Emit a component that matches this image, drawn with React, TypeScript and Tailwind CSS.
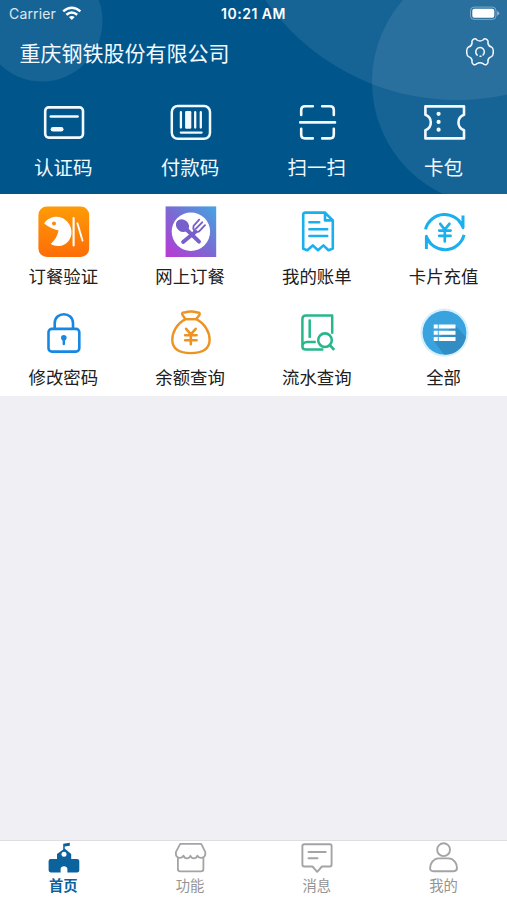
import type { ReactNode } from 'react';

type Item = { label: string; icon: ReactNode };

function Glyph({ children }: { children: ReactNode }) {
  return (
    <svg
      viewBox="0 0 54 54"
      className="block h-[54px] w-[54px] shrink-0"
      fill="none"
      stroke="currentColor"
      strokeLinecap="round"
      strokeLinejoin="round"
    >
      {children}
    </svg>
  );
}

const quick: Item[] = [
  {
    label: '认证码',
    icon: (
      <Glyph>
        <rect x="9.2" y="7.4" width="37.8" height="30.2" rx="3.5" strokeWidth="2.6" />
        <path d="M14.8 16.5H41.6" strokeWidth="2.6" />
        <path d="M17 29.2H25.2" strokeWidth="4.6" />
      </Glyph>
    ),
  },
  {
    label: '付款码',
    icon: (
      <Glyph>
        <rect x="8.8" y="6" width="38.2" height="32.8" rx="6" strokeWidth="2.5" />
        <path d="M17.9 12.2V27.6M32.2 12.2V27.6M37.8 12.2V27.6M17.8 32.6H38.6" strokeWidth="2.3" />
        <rect x="22.1" y="11" width="6.2" height="17.8" rx="1.2" fill="currentColor" stroke="none" />
      </Glyph>
    ),
  },
  {
    label: '扫一扫',
    icon: (
      <Glyph>
        <path
          d="M11.2 15V10Q11.2 6.3 15 6.3H22.8M32.2 6.3H40Q43.8 6.3 43.8 10V15M11.2 28.8V34.5Q11.2 38.4 15 38.4H22.8M32.2 38.4H40Q43.8 38.4 43.8 34.5V28.8M10.2 22.4H45"
          strokeWidth="2.6"
        />
      </Glyph>
    ),
  },
  {
    label: '卡包',
    icon: (
      <Glyph>
        <path
          d="M8.4 6.4H47V14.8C39.6 17.6 39.6 27.3 47 30.2V38.4H8.4V30.2C15.6 27.3 15.6 17.6 8.4 14.8Z"
          strokeWidth="2.6"
        />
        <g fill="currentColor" stroke="none">
          <circle cx="21.6" cy="13.8" r="2.1" />
          <circle cx="21.6" cy="21.9" r="2.1" />
          <circle cx="21.6" cy="29.7" r="2.1" />
        </g>
      </Glyph>
    ),
  },
];

const services: Item[] = [
  {
    label: '订餐验证',
    icon: (
      <Glyph>
        <defs>
          <linearGradient id="orange" x1="0" y1="0" x2="0" y2="1">
            <stop offset="0" stopColor="#ff9b06" />
            <stop offset="1" stopColor="#fd6d08" />
          </linearGradient>
        </defs>
        <rect x="2.4" y="1.4" width="50.8" height="50.6" rx="8.5" fill="url(#orange)" stroke="none" />
        <path d="M8.1 18.4C13.6 10.2 25.3 9.5 31.6 17C37.5 24 36.6 33.3 30.3 38.2C25.6 41.8 19.2 41.8 14.6 39.1C18.6 35.6 21.4 31 22.6 25.4C18 24.2 12.6 22 8.1 18.4Z" fill="#fff" stroke="none" />
        <circle cx="18" cy="18.4" r="2" fill="#ff8908" stroke="none" />
        <path d="M37.6 13V40.4" stroke="#fff" strokeWidth="2.1" />
        <path d="M41.4 18.3L46.5 35.6" stroke="#fff" strokeWidth="1.9" />
      </Glyph>
    ),
  },
  {
    label: '网上订餐',
    icon: (
      <Glyph>
        <defs>
          <linearGradient id="violet" x1="0" y1="1" x2="1" y2="0">
            <stop offset="0" stopColor="#bb38d4" />
            <stop offset=".5" stopColor="#7a6bd2" />
            <stop offset="1" stopColor="#44a5e3" />
          </linearGradient>
        </defs>
        <rect x="2.6" y="1.4" width="50.6" height="50.6" fill="url(#violet)" stroke="none" />
        <circle cx="27.9" cy="26.7" r="19.2" fill="#fff" stroke="none" />
        <g stroke="#7860cc">
          <ellipse cx="19.5" cy="20.6" rx="7" ry="6" transform="rotate(40 19.5 20.6)" fill="#7860cc" stroke="none" />
          <path d="M23 24L36 36.7" strokeWidth="3.9" />
          <path d="M20.1 37L32.5 26.7" strokeWidth="3.9" />
          <path d="M36.2 14.7L30.6 20.8C29.5 24.7 31.8 28 36.1 26.4L42 20.2M39.2 17.3L32.7 23.9" strokeWidth="1.9" />
        </g>
      </Glyph>
    ),
  },
  {
    label: '我的账单',
    icon: (
      <Glyph>
        <g stroke="#1bb0ed" strokeWidth="2.6">
          <path d="M35 7.6H15.4Q13.2 7.6 13.2 9.8V43.8L17.3 45.2L22.8 40.4L28 45.2L33.4 40.4L38.5 45.2L42.8 43.6V15.5L35 7.6V15.4H42.8" />
          <path d="M19.4 17.2H29.2M19.4 24.2H37.2M19.4 31H37.2" />
        </g>
      </Glyph>
    ),
  },
  {
    label: '卡片充值',
    icon: (
      <Glyph>
        <g stroke="#1bb0ed" strokeWidth="3" strokeLinecap="butt">
          <path d="M8.5 24.4A19.6 19.6 0 0 1 46 22.6V10.4" />
          <path d="M47 29.8A19.6 19.6 0 0 1 9.4 31.4V44" />
        </g>
        <path d="M40.6 16.4L46.8 24.4L46 17ZM14.8 37.6L8.8 29.6L9.6 37Z" fill="#1bb0ed" stroke="none" />
        <path d="M23.2 18.8L27.8 24.6L32.4 18.8M27.8 24.6V36.4M22.2 25.6H33.6M22.2 30.8H33.6" stroke="#1bb0ed" strokeWidth="2.7" />
      </Glyph>
    ),
  },
  {
    label: '修改密码',
    icon: (
      <Glyph>
        <g stroke="#1688e4" strokeWidth="2.6">
          <rect x="12.5" y="22.9" width="30.8" height="22.7" rx="3.3" />
          <path d="M18.7 22.8V17.3C18.7 5.3 37 5.3 37 17.3V22.8" />
        </g>
        <circle cx="27.8" cy="31.8" r="2.8" fill="#1688e4" stroke="none" />
        <path d="M27.8 32.3V38" stroke="#1688e4" strokeWidth="2.4" />
      </Glyph>
    ),
  },
  {
    label: '余额查询',
    icon: (
      <Glyph>
        <g stroke="#ed9322" strokeWidth="2.4">
          <path d="M22.4 13.1C14 17.5 9 26.4 9.3 34.3C9.6 42.9 15 47.1 27.8 47.1C40.7 47.1 46.3 42.9 46.6 34.3C46.9 26.4 41.8 17.5 33.3 13.1Z" />
          <path d="M22.4 13.1L19.4 8.8C18.4 6.9 19.8 6.2 21.7 6.5C25.8 5.3 30.5 5.3 34.2 6.5C36.4 6.3 37.4 7.3 36.4 9.1L33.3 13.1Z" />
          <path d="M23.1 22.8L27.8 28.4L32.7 22.8M27.8 28.4V38.3M22.1 29.3H33.6M22.1 34.3H33.6" strokeWidth="2.6" />
        </g>
      </Glyph>
    ),
  },
  {
    label: '流水查询',
    icon: (
      <Glyph>
        <g stroke="#27b78b" strokeWidth="2.5" strokeLinecap="butt">
          <path d="M42.2 27.7V9.5H16Q12.4 9.5 12.4 13.1V40.5Q12.4 43.6 16 43.6H33.4M12.5 40.3C12.5 37.9 14.4 36 17 36H25.8" />
          <path d="M19.7 13.4V31.9" />
          <circle cx="35" cy="34.2" r="6.8" strokeWidth="2.6" />
          <path d="M39.8 39.1L44.2 43.9" strokeWidth="2.8" />
        </g>
      </Glyph>
    ),
  },
  {
    label: '全部',
    icon: (
      <Glyph>
        <circle cx="27.5" cy="26.7" r="24.1" fill="#d5effd" stroke="none" />
        <circle cx="27.5" cy="26.7" r="21.9" fill="#38a3df" stroke="none" />
        <path d="M38 19.5L49 31C46.9 42.2 37.7 49.2 26.9 48.6L17 35Z" fill="#318dc3" stroke="none" />
        <g fill="#fff" stroke="none">
          <path d="M16.7 18.6H20.8V22.6H16.7ZM21.7 18.6H38.5V22.6H21.7ZM16.7 24.7H20.8V28.7H16.7ZM21.7 24.7H38.5V28.7H21.7ZM16.7 30.9H20.8V34.9H16.7ZM21.7 30.9H38.5V34.9H21.7Z" />
        </g>
      </Glyph>
    ),
  },
];

const tabs: Item[] = [
  {
    label: '首页',
    icon: (
      <g fill="#0b629c" stroke="none">
        <path d="M16.2 7.5V1.8L22.8 .8V3.8L17.7 4.4V6.4L24.2 12V17H30Q32.3 17 32.3 19V28.4Q32.3 30.4 30 30.4H20.4V27C20.4 23.2 13.6 23.2 13.6 27V30.4H3.8Q1.6 30.4 1.6 28.3V19Q1.6 17 3.8 17H10V12Z" />
        <circle cx="17" cy="12.2" r="2.5" fill="#fff" />
      </g>
    ),
  },
  {
    label: '功能',
    icon: (
      <g strokeWidth="1.8">
        <path d="M6.2 1.8H27.2L31.2 9.8C32.4 16.6 25.2 17.4 23.4 13.6C21.8 17.2 17.9 17.2 16.4 13.8C14.9 17.2 10.9 17.2 9.4 13.6C7.6 17.4 .8 16.6 2 9.8Z" />
        <path d="M3.9 15.8V27Q3.9 29.3 6.2 29.3H27.1Q29.4 29.3 29.4 27V15.8" />
      </g>
    ),
  },
  {
    label: '消息',
    icon: (
      <g strokeWidth="1.9">
        <path d="M4.3 2.2H29.9Q31.6 2.2 31.6 4V22.6Q31.6 24.5 29.9 24.5H21.9L17.2 29.8L12.5 24.5H4.3Q2.4 24.5 2.4 22.6V4Q2.4 2.2 4.3 2.2Z" />
        <path d="M8.5 10H25.7M8.5 16.3H17.5" />
      </g>
    ),
  },
  {
    label: '我的',
    icon: (
      <g strokeWidth="1.9">
        <circle cx="16.6" cy="7.7" r="6.4" />
        <path d="M11.6 16.4H21.6C27 16.8 30 21.4 30 26.1Q30 29.2 26.9 29.2H6.3Q3.1 29.2 3.1 26.1C3.1 21.4 6.2 16.8 11.6 16.4Z" />
      </g>
    ),
  },
];

function StatusBar() {
  return (
    <div className="flex h-7 items-center justify-between pr-[7px] pl-[9px] font-['Inter','Liberation_Sans',sans-serif] leading-7">
      <div className="flex w-[150px] items-center gap-[6px] text-[14px] tracking-[0.15px] text-white/85">
        <span>Carrier</span>
        <svg viewBox="0 0 20 15" className="mb-0.5 h-[15px] w-5" fill="none" stroke="white">
          <path d="M1.2 5.4Q9.8-2 18.4 5.4M4.4 8.7Q9.8 4.2 15.2 8.7" strokeWidth="2.5" />
          <path d="M6.9 11.1Q9.8 8.8 12.7 11.1L9.8 14.1Z" fill="white" stroke="none" />
        </svg>
      </div>
      <span className="mr-[2px] text-[14px] font-semibold tracking-[0.5px] text-white">10:21 AM</span>
      <div className="flex w-[150px] justify-end">
        <svg viewBox="0 0 32 16" className="h-4 w-8" fill="none">
          <rect x="2.5" y="1.1" width="25.5" height="12.3" rx="3.5" stroke="white" strokeOpacity=".4" />
          <rect x="4.3" y="2.8" width="22" height="8.9" rx="2" fill="white" />
          <path d="M29.2 5V9.7Q31.2 8.8 31.2 7.3Q31.2 5.8 29.2 5Z" fill="white" fillOpacity=".5" />
        </svg>
      </div>
    </div>
  );
}

export default function App() {
  return (
    <div className="flex h-[900px] w-full flex-col overflow-hidden bg-[#efeff4] font-['Noto_Sans_CJK_SC','Noto_Sans',sans-serif]">
      <header className="relative h-[194px] shrink-0 overflow-hidden bg-[#00558b] text-[#f2f9ff]">
        <svg viewBox="0 0 507 194" className="absolute inset-0 h-[194px] w-[507px]" fill="white" fillOpacity=".085">
          <circle cx="42" cy="21" r="60.5" />
          <circle cx="457" cy="-134" r="234" />
          <circle cx="496" cy="82" r="124" />
        </svg>
        <div className="relative">
          <StatusBar />
          <div className="flex h-12 items-center justify-between pr-[13px] pl-[19.5px]">
            <h1 className="text-[21px] leading-[30px] font-normal">重庆钢铁股份有限公司</h1>
            <svg viewBox="0 0 28 28" className="h-7 w-7" fill="none" stroke="currentColor" strokeWidth="1.5" strokeLinecap="round" strokeLinejoin="round">
              <path d="M7.4 1.3C8.8.4 10 .8 11 2Q14 4 17 2C18 .8 19.2.4 20.6 1.3C22.3 2.4 22.3 3.6 21.9 5Q22.5 8.2 25.4 9C27 9.6 27.3 11.2 27.3 13.8C27.3 16.3 27 17.9 25.4 18.6Q22.5 19.4 21.9 22.5C22.3 24 22.3 25.2 20.6 26.3C19.2 27.2 18 26.8 17 25.6Q14 23.7 11 25.6C10 26.8 8.8 27.2 7.4 26.3C5.7 25.2 5.7 24 6.1 22.5Q5.5 19.4 2.6 18.6C1 17.9.7 16.3.7 13.8C.7 11.2 1 9.6 2.6 9Q5.5 8.2 6.1 5C5.7 3.6 5.7 2.4 7.4 1.3Z" />
              <path d="M11.2 17.1A4.3 4.3 0 1 1 17.1 16.9M14 18.2H15" />
            </svg>
          </div>
          <nav className="grid grid-cols-4 pt-6">
            {quick.map((item) => (
              <div key={item.label} className="flex flex-col items-center">
                {item.icon}
                <span className="-mt-[1px] text-[19.5px] leading-7">{item.label}</span>
              </div>
            ))}
          </nav>
        </div>
      </header>

      <main className="grid h-[202px] shrink-0 grid-cols-4 grid-rows-[101px_101px] bg-white pt-[11px] text-[#202020]">
        {services.map((item) => (
          <div key={item.label} className="flex flex-col items-center">
            {item.icon}
            <span className="mt-[5px] text-[17.4px] leading-6">{item.label}</span>
          </div>
        ))}
      </main>

      <footer className="mt-auto grid h-[60px] shrink-0 grid-cols-4 border-t border-[#dedee2] bg-white text-[#949494]">
        {tabs.map((tab, i) => (
          <div key={tab.label} className={i === 0 ? 'flex flex-col items-center font-bold text-[#0b629c]' : 'flex flex-col items-center'}>
            <svg viewBox="0 0 33 33" className="mt-[1px] h-[33px] w-[33px]" fill="none" stroke="#a4a4a4" strokeLinecap="round" strokeLinejoin="round">
              {tab.icon}
            </svg>
            <span className="text-[14.3px] leading-5">{tab.label}</span>
          </div>
        ))}
      </footer>
    </div>
  );
}
